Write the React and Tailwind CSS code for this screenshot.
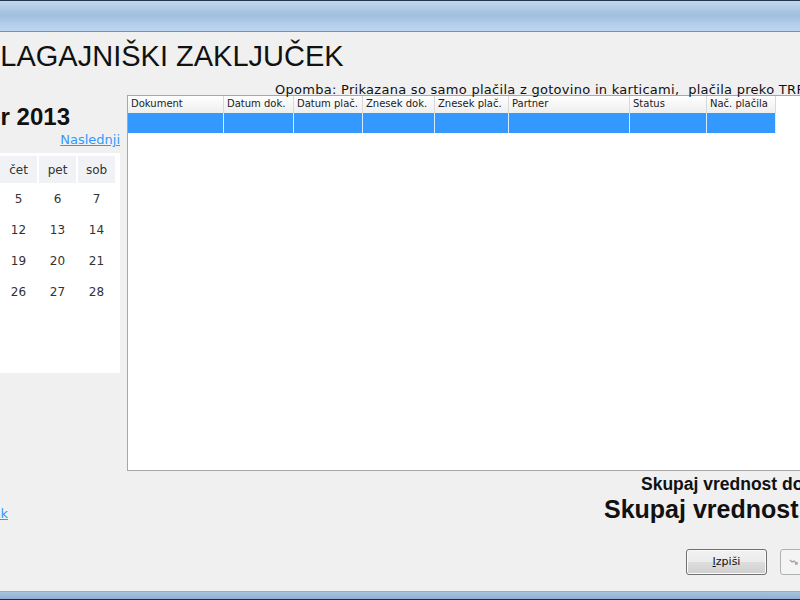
import React from 'react'

const days = ['ned', 'pon', 'tor', 'sre', 'čet', 'pet', 'sob']
const weeks = [
  [1, 2, 3, 4, 5, 6, 7],
  [8, 9, 10, 11, 12, 13, 14],
  [15, 16, 17, 18, 19, 20, 21],
  [22, 23, 24, 25, 26, 27, 28],
  [29, 30, null, null, null, null, null],
]

const columns = [
  { label: 'Dokument', w: 'w-[96px]' },
  { label: 'Datum dok.', w: 'w-[70px]' },
  { label: 'Datum plač.', w: 'w-[69px]' },
  { label: 'Znesek dok.', w: 'w-[72px]' },
  { label: 'Znesek plač.', w: 'w-[74px]' },
  { label: 'Partner', w: 'w-[121px]' },
  { label: 'Status', w: 'w-[77px]' },
  { label: 'Nač. plačila', w: 'w-[69px]' },
]

function Calendar() {
  return (
    <div className="ml-[-159px] mt-[5px] w-[279px] h-[220px] bg-white pl-[3px] pt-[3px] shrink-0">
      <div className="grid grid-cols-7 gap-x-[2px] w-[271px]">
        {days.map(d => (
          <div key={d} className="h-[27px] bg-[#f0f2f5] flex items-center justify-center text-[12px] text-[#333]">{d}</div>
        ))}
        {weeks.flat().map((n, i) => (
          <div key={i} className="h-[31px] flex items-center justify-center text-[12px] text-[#333]">{n}</div>
        ))}
      </div>
    </div>
  )
}

function ResultsTable() {
  return (
    <div className="w-[760px] h-[376px] border border-[#a7a7a7] bg-white shrink-0">
      <div className="flex h-[17px]">
        {columns.map(c => (
          <div key={c.label} className={`${c.w} shrink-0 border-r border-[#d9d9d9] bg-gradient-to-b from-white to-[#eeeeee] pl-[3px] text-[10px] leading-[16px] text-[#222] whitespace-nowrap overflow-hidden`}>
            {c.label}
          </div>
        ))}
      </div>
      <div className="flex h-[20px]">
        {columns.map(c => (
          <div key={c.label} className={`${c.w} shrink-0 border-r border-[#d8ebff] bg-[#3399ff]`} />
        ))}
      </div>
    </div>
  )
}

export default function App() {
  return (
    <div className="w-[800px] h-[600px] overflow-hidden bg-[#f0f0f0] flex flex-col font-['DejaVu_Sans',sans-serif]">
      <div className="h-[32px] shrink-0 border-t border-[#24364a] border-b border-b-[#7d91a6] bg-[linear-gradient(to_bottom,#c2d8ef_0%,#a9c4e1_35%,#a2bfdf_50%,#b2cdea_75%,#bdd6f0_100%)]" />

      <div className="flex-1 flex flex-col">
        <h1 className="ml-[-19px] mt-[9px] h-[30px] text-[29px] leading-[30px] font-normal text-[#111] whitespace-nowrap font-['Liberation_Sans',Arial,sans-serif]">
          BLAGAJNIŠKI ZAKLJUČEK
        </h1>

        <div className="flex">
          <div className="w-[127px] shrink-0 flex flex-col">
            <div className="ml-[-200px] w-[270px] mt-[34px] h-[24px] text-right text-[24px] leading-[24px] font-bold text-[#111] whitespace-nowrap font-['Liberation_Sans',Arial,sans-serif]">
              September 2013
            </div>
            <div className="mt-[3px] pr-[7px] h-[16px] text-right text-[13px] leading-[16px]">
              <a className="text-[#3399ff] underline">Naslednji</a>
            </div>
            <Calendar />
            <div className="mt-[133px] ml-[-150px] w-[158px] text-right text-[13px] leading-[16px] whitespace-nowrap">
              <a className="text-[#3399ff] underline">Natisni mesec in tisk</a>
            </div>
          </div>

          <div className="flex flex-col shrink-0 w-[760px]">
            <div className="mt-[11px] h-[13px] pl-[148px] text-[13px] leading-[15px] tracking-[0.28px] text-[#111] whitespace-nowrap relative z-10">
              Opomba: Prikazana so samo plačila z gotovino in karticami,&nbsp; plačila preko TRR niso prikazana.
            </div>
            <ResultsTable />
            <div className="mt-[5px] h-[17px] pl-[514px] text-[17.5px] leading-[17px] font-bold text-[#111] whitespace-nowrap font-['Liberation_Sans',Arial,sans-serif]">
              Skupaj vrednost dokumentov:
            </div>
            <div className="mt-[4px] h-[24px] pl-[477px] text-[25px] leading-[24px] font-bold text-[#111] whitespace-nowrap font-['Liberation_Sans',Arial,sans-serif]">
              Skupaj vrednost plačil:
            </div>
            <div className="mt-[28px] pl-[559px] flex gap-[13px]">
              <button className="w-[81px] h-[26px] rounded-[3px] border border-[#707070] bg-[linear-gradient(to_bottom,#f2f2f2_0%,#ebebeb_49%,#dddddd_51%,#cfcfcf_100%)] text-[11px] text-[#111] shadow-[inset_0_0_0_1px_#fbfbfb]">
                <span className="underline">I</span>zpiši
              </button>
              <button className="w-[81px] h-[26px] rounded-[3px] border border-[#adb2b5] bg-[#f4f4f4] flex items-center pl-[8px]">
                <svg width="10" height="8" viewBox="0 0 10 8" fill="none" stroke="#a5a5a5" strokeWidth="1.4">
                  <path d="M1 2 L3 4 L5 3 L8 6 M6 6 L8 6 L8 4" />
                </svg>
              </button>
            </div>
          </div>
        </div>
      </div>

      <div className="h-[9px] shrink-0 border-t border-[#9eabb8] border-b border-b-[#1e2f40] bg-[linear-gradient(to_bottom,#a8c3de,#8eafd1)]" />
    </div>
  )
}
